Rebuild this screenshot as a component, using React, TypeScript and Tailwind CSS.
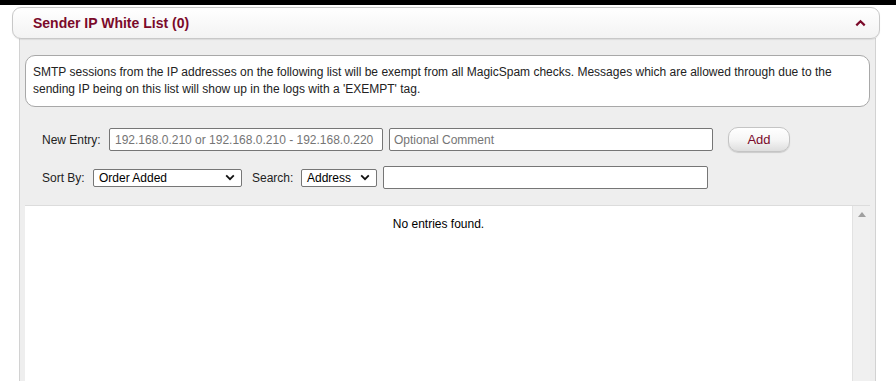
import React from "react";

function Chevron({ className = "" }: { className?: string }) {
  return (
    <svg width="10" height="7" viewBox="0 0 10 7" className={className}>
      <path d="M1.2 5.6 L5 1.8 L8.8 5.6" fill="none" stroke="#111" strokeWidth="1.8" />
    </svg>
  );
}

function FakeSelect({ w, label }: { w: string; label: string }) {
  return (
    <div
      className={`${w} h-[18px] flex items-center justify-between border border-[#767676] rounded-[2px] bg-white pl-[5px] pr-[6px] text-[12px] text-black`}
    >
      <span>{label}</span>
      <Chevron className="rotate-180" />
    </div>
  );
}

export default function App() {
  return (
    <div
      className="w-[896px] h-[381px] bg-white overflow-hidden text-[12px] text-[#222]"
      style={{ fontFamily: '"Liberation Sans", Arial, sans-serif' }}
    >
      <div className="h-[5px] bg-black" />
      <div className="ml-[12px] mt-[2px] w-[868px] h-[32px] border border-[#c8c8c8] rounded-[9px] bg-gradient-to-b from-white to-[#f3f3f3] flex items-center justify-between pl-[20px] pr-[13px] shadow-[0_1px_1px_rgba(0,0,0,0.08)] relative z-10">
        <span className="font-bold text-[14px] text-[#7b0a2a] pt-[1px]">Sender IP White List (0)</span>
        <svg width="11" height="8" viewBox="0 0 11 8" className="mt-[-1px]">
          <path d="M1.3 6.4 L5.5 2.2 L9.7 6.4" fill="none" stroke="#7b0a2a" strokeWidth="2.2" />
        </svg>
      </div>
      <div className="ml-[19px] w-[857px] h-[400px] bg-[#eeeeee] border-x border-[#d2d2d2] mt-[-1px] pt-[17px] px-[5px]">
        <div className="h-[52px] border border-[#a8a8a8] rounded-[10px] bg-white px-[7px] pt-[8px] leading-[17px] text-[12px] text-[#222]">
          SMTP sessions from the IP addresses on the following list will be exempt from all MagicSpam checks. Messages which are allowed through due to the sending IP being on this list will show up in the logs with a 'EXEMPT' tag.
        </div>
        <div className="flex items-center mt-[20px] h-[25px] pl-[17px]">
          <span className="w-[67px]">New Entry:</span>
          <div className="w-[274px] h-[23px] border border-[#767676] rounded-[2px] bg-white flex items-center pl-[5px] text-[#757575]">
            192.168.0.210 or 192.168.0.210 - 192.168.0.220
          </div>
          <div className="ml-[6px] w-[324px] h-[23px] border border-[#767676] rounded-[2px] bg-white flex items-center pl-[4px] text-[#757575]">
            Optional Comment
          </div>
          <div className="ml-[15px] w-[62px] h-[25px] rounded-[10px] border border-[#c4c4c4] bg-gradient-to-b from-white via-[#f6f6f6] to-[#dedede] flex items-center justify-center text-[13px] text-[#7b0a2a] shadow-[0_1px_1px_rgba(0,0,0,0.15)]">
            Add
          </div>
        </div>
        <div className="flex items-center mt-[14px] h-[23px] pl-[17px]">
          <span className="w-[51px]">Sort By:</span>
          <FakeSelect w="w-[149px]" label="Order Added" />
          <span className="ml-[10px] w-[49px]">Search:</span>
          <FakeSelect w="w-[76px]" label="Address" />
          <div className="ml-[6px] w-[325px] h-[23px] border border-[#767676] rounded-[2px] bg-white" />
        </div>
        <div className="mt-[16px] h-[200px] bg-white border-t border-[#dcdcdc] flex">
          <div className="flex-1 flex justify-center pt-[9px] text-black">No entries found.</div>
          <div className="w-[18px] bg-[#f0f0f0] border-l border-[#e2e2e2] flex justify-center pt-[6px]">
            <svg width="8" height="5" viewBox="0 0 8 5">
              <path d="M0 5 L4 0 L8 5 Z" fill="#a0a0a0" />
            </svg>
          </div>
        </div>
      </div>
    </div>
  );
}
